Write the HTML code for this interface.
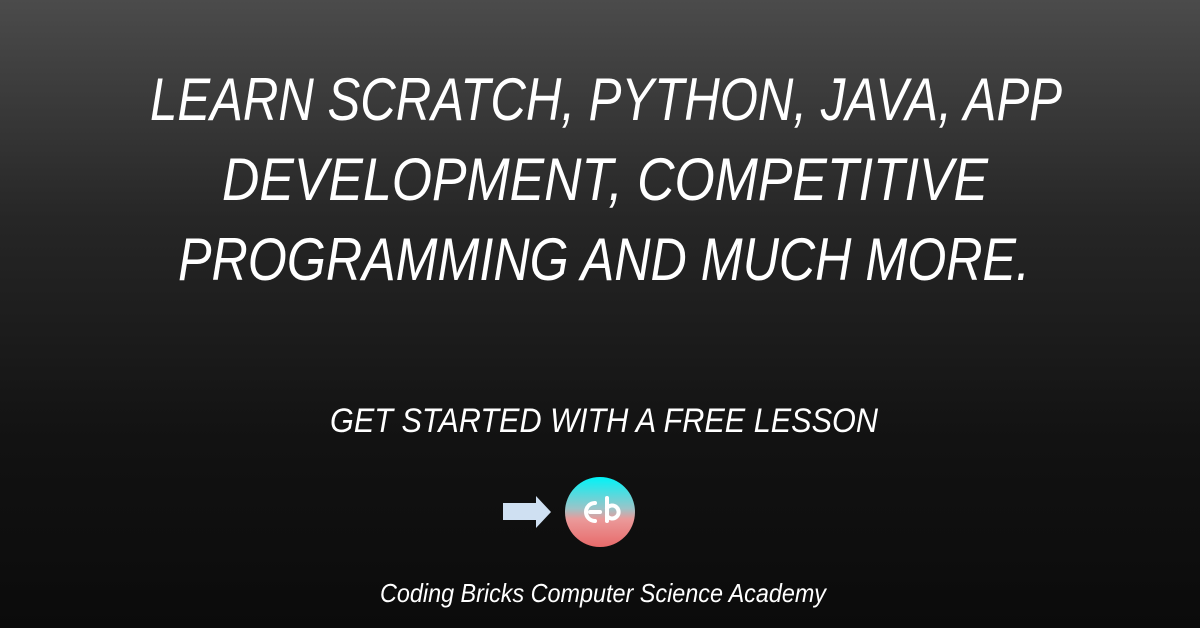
<!DOCTYPE html>
<html><head><meta charset="utf-8"><style>
html,body{margin:0;padding:0}
body{width:1200px;height:628px;overflow:hidden;background:linear-gradient(180deg,#4b4b4b 0%,#262626 35%,#121212 70%,#0b0b0b 100%);}
svg{display:block}
</style></head><body>
<svg width="1200" height="628" viewBox="0 0 1200 628" xmlns="http://www.w3.org/2000/svg">
<defs>
<linearGradient id="lg" x1="0" y1="0" x2="0" y2="1">
<stop offset="0" stop-color="#00f4f8"/>
<stop offset="0.45" stop-color="#9cc4c8"/>
<stop offset="0.6" stop-color="#ea9a9a"/>
<stop offset="1" stop-color="#e86a6a"/>
</linearGradient>
</defs>
<g font-family="Liberation Sans, sans-serif" font-style="italic" fill="#fff">
<text x="150" y="120" font-size="60" textLength="912" lengthAdjust="spacingAndGlyphs">LEARN SCRATCH, PYTHON, JAVA, APP</text>
<text x="222" y="200" font-size="60" textLength="766" lengthAdjust="spacingAndGlyphs">DEVELOPMENT, COMPETITIVE</text>
<text x="178" y="280" font-size="60" textLength="852" lengthAdjust="spacingAndGlyphs">PROGRAMMING AND MUCH MORE.</text>
<text x="330" y="432" font-size="34" textLength="548" lengthAdjust="spacingAndGlyphs">GET STARTED WITH A FREE LESSON</text>
<text x="380" y="602" font-size="26" textLength="446" lengthAdjust="spacingAndGlyphs">Coding Bricks Computer Science Academy</text>
</g>
<polygon points="503,503 536,503 536,496 551,512 536,528 536,520 503,520" fill="#cfe0f2"/>
<circle cx="600" cy="512" r="35" fill="url(#lg)"/>
<g fill="none" stroke="#fff" stroke-width="4" stroke-linecap="round">
<path d="M595,503 A9,9 0 1 0 595,521"/>
<path d="M607,498 L607,521"/>
<path d="M607,508 A6.5,6.5 0 1 1 607,516"/>
<path d="M590,512 L600,512"/>
</g>
</svg>
</body></html>
